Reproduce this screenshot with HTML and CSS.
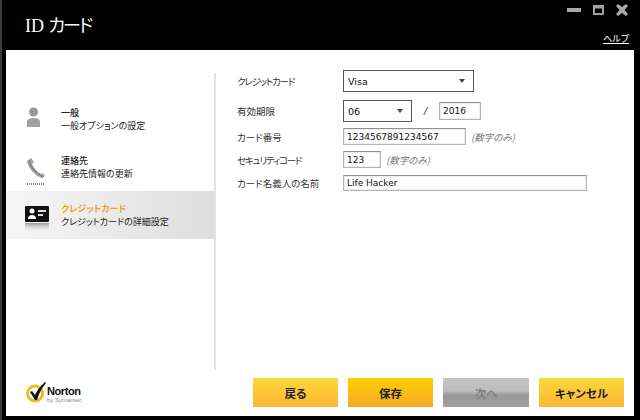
FILE: index.html
```html
<!DOCTYPE html>
<html lang="ja">
<head>
  <meta charset="UTF-8">
  <title>ID カード</title>
  <link rel="stylesheet" href="styles.css">
</head>
<body>
  <div class="window">
    <div class="titlebar">
      <div class="title">ID <span class="title-kana">カード</span></div>
      <div class="title-right">
        <div class="win-controls">
          <svg width="64" height="14" viewBox="0 0 64 14">
            <rect x="0" y="5" width="14" height="4" fill="#a8a8a8"/>
            <path d="M26 2h11v10h-11z M28 5.500v4.500h7v-4.500z" fill="#a0a0a0" fill-rule="evenodd"/>
            <path d="M49 3l2-2 4 3 4-3 2 2-3.500 4 3.500 4-2 2-4-3-4 3-2-2 3.500-4z" fill="#a8a8a8"/>
          </svg>
        </div>
        <a class="help">ヘルプ</a>
      </div>
    </div>

    <div class="panel">
      <div class="main">
        <div class="sidebar">
          <div class="nav-item">
            <svg class="nav-icon" width="34" height="40" viewBox="0 0 34 40">
              <circle cx="15.500" cy="13" r="4.500" fill="#9a9a9a"/>
              <path d="M9 28v-5c0-3 3-4 6.500-4s6.500 1 6.500 4v5z" fill="#a0a0a0"/>
            </svg>
            <div class="nav-text">
              <div class="nav-head">一般</div>
              <div>一般オプションの設定</div>
            </div>
          </div>
          <div class="nav-item">
            <svg class="nav-icon" width="34" height="40" viewBox="0 0 34 40">
              <path d="M9 14l4-3 3 4-2 2c2 4 5 8 9 10l2-1 2 3-3 2c-7-2-14-10-15-17z" fill="#a4a4a4"/>
              <path d="M11 13c1 6 6 13 14 17" fill="none" stroke="#777" stroke-width="1.200"/>
              <path d="M9 37h18" stroke="#8a8a8a" stroke-width="2" stroke-dasharray="1 1"/>
            </svg>
            <div class="nav-text">
              <div class="nav-head">連絡先</div>
              <div>連絡先情報の更新</div>
            </div>
          </div>
          <div class="nav-item active">
            <svg class="nav-icon" width="34" height="40" viewBox="0 0 34 40">
              <defs>
                <linearGradient id="card-shine" x1="0" y1="0" x2="0" y2="1">
                  <stop offset="0" stop-color="#9a9a9a"/>
                  <stop offset="1" stop-color="#ececec" stop-opacity="0"/>
                </linearGradient>
              </defs>
              <rect x="7" y="11" width="24" height="16" rx="1" fill="#111"/>
              <circle cx="14" cy="16" r="2.500" fill="#fff"/>
              <path d="M10 24c0-3 2-4 4-4s4 1 4 4z" fill="#fff"/>
              <path d="M20 15h8v2h-8z M20 19h5v2h-5z" fill="#ddd"/>
              <rect x="7" y="28" width="24" height="9" fill="url(#card-shine)"/>
            </svg>
            <div class="nav-text">
              <div class="nav-head">クレジットカード</div>
              <div>クレジットカードの詳細設定</div>
            </div>
          </div>
        </div>

        <div class="form">
          <div class="row row-card">
            <label class="tight">クレジットカード</label>
            <div class="select select-wide"><span>Visa</span><i class="arrow"></i></div>
          </div>
          <div class="row row-date">
            <label>有効期限</label>
            <div class="select select-month"><span>06</span><i class="arrow"></i></div>
            <span class="slash">/</span>
            <div class="input input-year">2016</div>
          </div>
          <div class="row row-num">
            <label>カード番号</label>
            <div class="input input-number">1234567891234567</div>
            <span class="hint">(数字のみ)</span>
          </div>
          <div class="row row-sec">
            <label class="tight">セキュリティコード</label>
            <div class="input input-code">123</div>
            <span class="hint">(数字のみ)</span>
          </div>
          <div class="row row-name">
            <label>カード名義人の名前</label>
            <div class="input input-name">Life Hacker</div>
          </div>
        </div>
      </div>

      <div class="footer">
        <div class="logo">
          <svg width="21" height="24" viewBox="0 0 21 24">
            <circle cx="9" cy="11.500" r="7.500" fill="none" stroke="#f2b91e" stroke-width="3"/>
            <path d="M4 10l2-1 3 4c2-4 5-9 10-13l1 1c-4 5-7 10-9 17h-2z" fill="#111"/>
          </svg>
          <div class="logo-text">
            <div class="logo-name">Norton</div>
            <div class="logo-sub">by Symantec</div>
          </div>
        </div>
        <div class="buttons">
          <div class="btn">戻る</div>
          <div class="btn btn-primary">保存</div>
          <div class="btn btn-disabled">次へ</div>
          <div class="btn">キャンセル</div>
        </div>
      </div>
    </div>
  </div>
</body>
</html>
```

FILE: styles.css
```css
body {
  margin: 0;
  background-color: #000;
  font-family: "Noto Sans CJK JP", "Liberation Sans", sans-serif;
  font-feature-settings: "palt";
  overflow: hidden;
}

.window {
  width: 640px;
  height: 420px;
  display: flex;
  flex-direction: column;
  background-color: #000;
  box-shadow: inset 2px 0 0 #3c3c3c;
}

/* Title bar */
.titlebar {
  flex: none;
  height: 50px;
  display: flex;
  justify-content: space-between;
  padding: 0 11px 0 25px;
  box-sizing: border-box;
}

.title {
  color: #fff;
  font-family: "Liberation Serif", "Noto Sans CJK JP", serif;
  font-size: 18px;
  line-height: 20px;
  padding-top: 16px;
}

.title-kana {
  letter-spacing: -2px;
}

.title-right {
  display: flex;
  flex-direction: column;
  align-items: flex-end;
}

.win-controls {
  height: 30px;
  padding-top: 3px;
  box-sizing: border-box;
  line-height: 0;
  margin-right: -2px;
}

.help {
  color: #fff;
  font-size: 9px;
  line-height: 13px;
  padding-top: 2px;
  text-decoration: underline;
}

/* White panel */
.panel {
  flex: 1;
  min-height: 0;
  margin: 0 6px 4px 6px;
  background-color: #fff;
  display: flex;
  flex-direction: column;
}

.main {
  flex: 1;
  display: flex;
  padding-top: 23px;
  min-height: 0;
}

.sidebar {
  flex: none;
  width: 208px;
  height: 275px;
  border-right: 2px solid #e2e2e2;
  padding-top: 22px;
}

.nav-item {
  height: 48px;
  display: flex;
  align-items: center;
  padding-left: 12px;
  color: #222;
  font-size: 9px;
  line-height: 13.5px;
}

.nav-item.active {
  background: linear-gradient(to right, #f6f6f6, #dedede);
}

.nav-icon {
  flex: none;
  margin-right: 9px;
}

.nav-head {
  font-weight: 500;
}

.active .nav-head {
  color: #f0a020;
  font-weight: 700;
}

/* Form */
.form {
  padding: 0 0 0 21px;
  margin-top: -3px;
  font-size: 9.5px;
  color: #333;
}

.row {
  display: flex;
  align-items: center;
}

.row label {
  width: 106px;
  flex: none;
}

.row label.tight {
  letter-spacing: -1.2px;
}

.row-card { height: 22px; margin-bottom: 8px; }
.row-date { height: 22px; margin-bottom: 6px; }
.row-num { height: 17px; margin-bottom: 6px; }
.row-sec { height: 17px; margin-bottom: 7px; }
.row-name { height: 16px; }

.select {
  height: 22px;
  box-sizing: border-box;
  border: 1px solid #555;
  background-color: #fff;
  display: flex;
  align-items: center;
  justify-content: space-between;
  padding: 0 8px 0 4px;
  font-family: "DejaVu Sans", sans-serif;
  font-size: 9.5px;
  color: #111;
}

.select-wide { width: 131px; }
.select-month { width: 69px; }

.arrow {
  width: 0;
  height: 0;
  border-left: 3px solid transparent;
  border-right: 3px solid transparent;
  border-top: 4px solid #444;
}

.slash {
  width: 27px;
  text-align: center;
  font-family: "Liberation Sans", sans-serif;
  font-size: 11px;
  font-style: italic;
}

.input {
  box-sizing: border-box;
  height: 100%;
  border: 1px solid #b4b4b4;
  border-top-color: #909090;
  box-shadow: inset 0 0 2px #c4c4c4;
  padding: 0 3px;
  font-family: "DejaVu Sans", sans-serif;
  font-size: 9px;
  color: #111;
  display: flex;
  align-items: center;
}

.input-year { width: 42px; height: 18px; }
.input-number { width: 123px; }
.input-code { width: 38px; }
.input-name { width: 244px; }

.hint {
  margin-left: 5px;
  font-size: 9.5px;
  font-style: italic;
  color: #777;
}

/* Footer */
.footer {
  flex: none;
  height: 46px;
  display: flex;
  justify-content: space-between;
  padding: 8px 10px 9px 20px;
  box-sizing: border-box;
}

.logo {
  display: flex;
  align-items: flex-start;
  padding-top: 4px;
}

.logo-text {
  padding-top: 4px;
  font-family: "Liberation Sans", sans-serif;
}

.logo-name {
  font-size: 11px;
  line-height: 11px;
  font-weight: 700;
  color: #111;
  letter-spacing: -0.4px;
}

.logo-sub {
  font-size: 6px;
  line-height: 7px;
  color: #888;
}

.buttons {
  display: flex;
  gap: 10px;
  height: 29px;
}

.btn {
  width: 85px;
  height: 29px;
  display: flex;
  align-items: center;
  justify-content: center;
  font-size: 11.5px;
  font-weight: 700;
  color: #222;
  background: linear-gradient(to bottom, #fdd63a, #fbb836);
}

.btn-primary {
  background: linear-gradient(to bottom, #fdd000, #f6a92a);
}

.btn-disabled {
  width: 86px;
  background: linear-gradient(to bottom, #c4c4c4 0%, #bdbdbd 45%, #999 60%, #a0a0a0 100%);
  color: #808080;
}
```
